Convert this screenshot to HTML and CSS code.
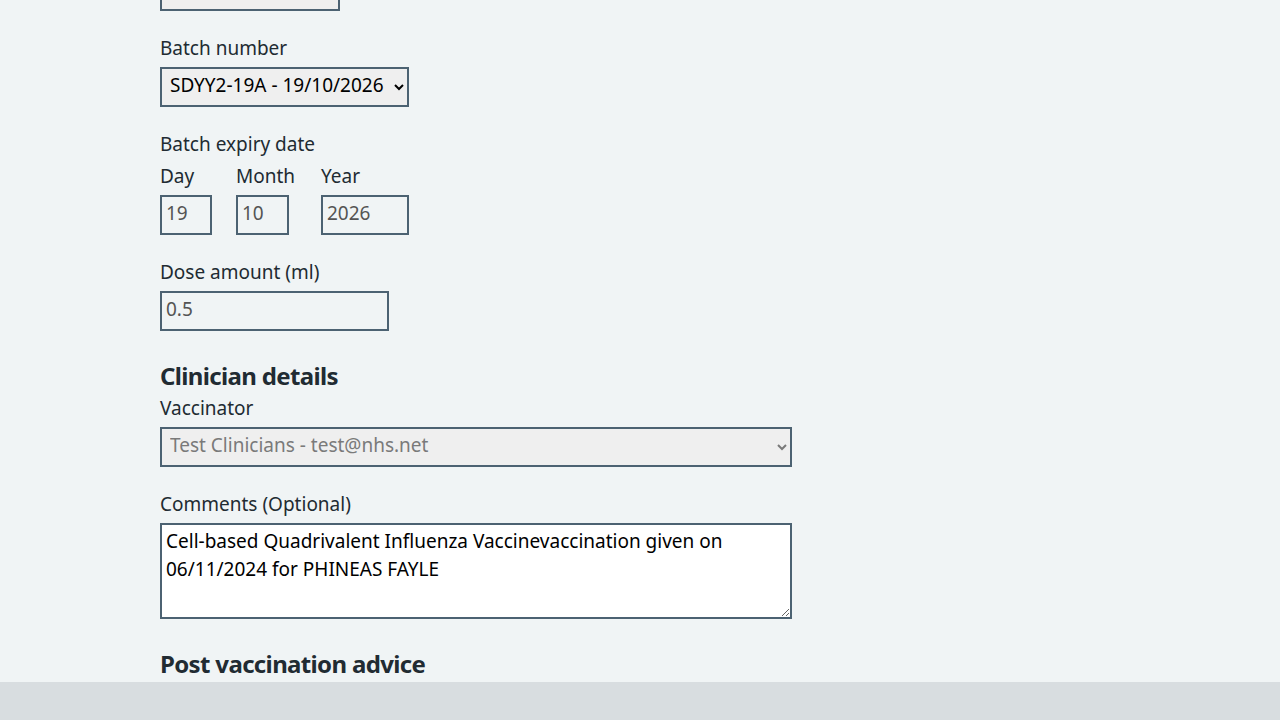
FILE: index.html
```html
<!DOCTYPE html>
<html lang="en">
<head>
<meta charset="utf-8">
<title>Vaccination details</title>
<link rel="stylesheet" href="styles.css">
</head>
<body>
<main class="page">
  <div class="form-group form-group--cut">
    <input class="input input--filled input--top" type="text" value="" readonly>
  </div>

  <div class="form-group">
    <label class="label" for="batch">Batch number</label>
    <select class="select select--batch" id="batch">
      <option>SDYY2-19A - 19/10/2026</option>
    </select>
  </div>

  <fieldset class="form-group fieldset">
    <legend class="label legend">Batch expiry date</legend>
    <div class="date">
      <div class="date__item">
        <label class="label" for="day">Day</label>
        <input class="input input--day" id="day" type="text" value="19" disabled>
      </div>
      <div class="date__item date__item--month">
        <label class="label" for="month">Month</label>
        <input class="input input--month" id="month" type="text" value="10" disabled>
      </div>
      <div class="date__item">
        <label class="label" for="year">Year</label>
        <input class="input input--year" id="year" type="text" value="2026" disabled>
      </div>
    </div>
  </fieldset>

  <div class="form-group">
    <label class="label" for="dose">Dose amount (ml)</label>
    <input class="input input--dose" id="dose" type="text" value="0.5" disabled>
  </div>

  <h2 class="heading heading--first">Clinician details</h2>
  <div class="form-group">
    <label class="label" for="vaccinator">Vaccinator</label>
    <select class="select select--wide" id="vaccinator" disabled>
      <option>Test Clinicians - test@nhs.net</option>
    </select>
  </div>

  <div class="form-group">
    <label class="label" for="comments">Comments (Optional)</label>
    <textarea class="textarea" id="comments" rows="3">Cell-based Quadrivalent Influenza Vaccinevaccination given on 06/11/2024 for PHINEAS FAYLE</textarea>
  </div>

  <h2 class="heading heading--second">Post vaccination advice</h2>
</main>
<div class="footer-bar"></div>
</body>
</html>
```

FILE: styles.css
```css
* { box-sizing: border-box; }

html, body {
  margin: 0;
  padding: 0;
  background: #f0f4f5;
  color: #212b32;
  font-family: "Noto Sans", "Open Sans", Arial, sans-serif;
  overflow: hidden;
}

.page {
  width: 1280px;
  height: 720px;
  padding: 0 0 0 160px;
}

.form-group {
  margin: 0 0 24px 0;
}

.form-group--cut {
  margin-top: -29px;
}

.fieldset {
  border: 0;
  padding: 0;
  min-width: 0;
}

.label {
  display: block;
  font-size: 19px;
  line-height: 26px;
  padding: 0 0 2px 0;
  margin: 0 0 4px 0;
}

.legend {
  float: left;
  width: 100%;
}

.date {
  clear: both;
  display: flex;
}

.date__item {
  margin-right: 24px;
}

.date__item--month {
  min-width: 61px;
}

.input {
  display: block;
  height: 40px;
  border: 2px solid #4c6272;
  border-radius: 0;
  padding: 0 4px 4px 4px;
  font-family: inherit;
  font-size: 19px;
  background: transparent;
  color: #212b32;
  outline: none;
}

.input:disabled {
  color: #545454;
  -webkit-text-fill-color: #545454;
  opacity: 1;
}

.input--filled { background: #efefef; }
.input--top { width: 180px; }
.input--day { width: 52px; }
.input--month { width: 53px; }
.input--year { width: 88px; }
.input--dose { width: 229px; }

.select {
  display: block;
  height: 40px;
  border: 2px solid #4c6272;
  border-radius: 0;
  padding: 0 4px 4px 4px;
  font-family: inherit;
  font-size: 19px;
  background: #efefef;
  color: #000;
}

.select--batch { width: 249px; }

.select--wide {
  width: 632px;
}

.select--wide:disabled {
  color: #7a7a7a;
  opacity: 1;
  background: #efefef;
  border-color: #4c6272;
}

.textarea {
  display: block;
  width: 632px;
  height: 96px;
  border: 2px solid #4c6272;
  border-radius: 0;
  padding: 2px 4px;
  font-family: inherit;
  font-size: 19px;
  line-height: 28px;
  background: #fff;
  color: #000;
  resize: both;
}

.heading {
  font-size: 24px;
  line-height: 32px;
  font-weight: 700;
  letter-spacing: -0.65px;
  margin: 0;
}

.heading--first {
  margin: 29px 0 3px 0;
}

.heading--second {
  margin: 29px 0 0 0;
}

.footer-bar {
  position: fixed;
  left: 0;
  right: 0;
  bottom: 0;
  height: 38px;
  background: #d8dde0;
}
```
